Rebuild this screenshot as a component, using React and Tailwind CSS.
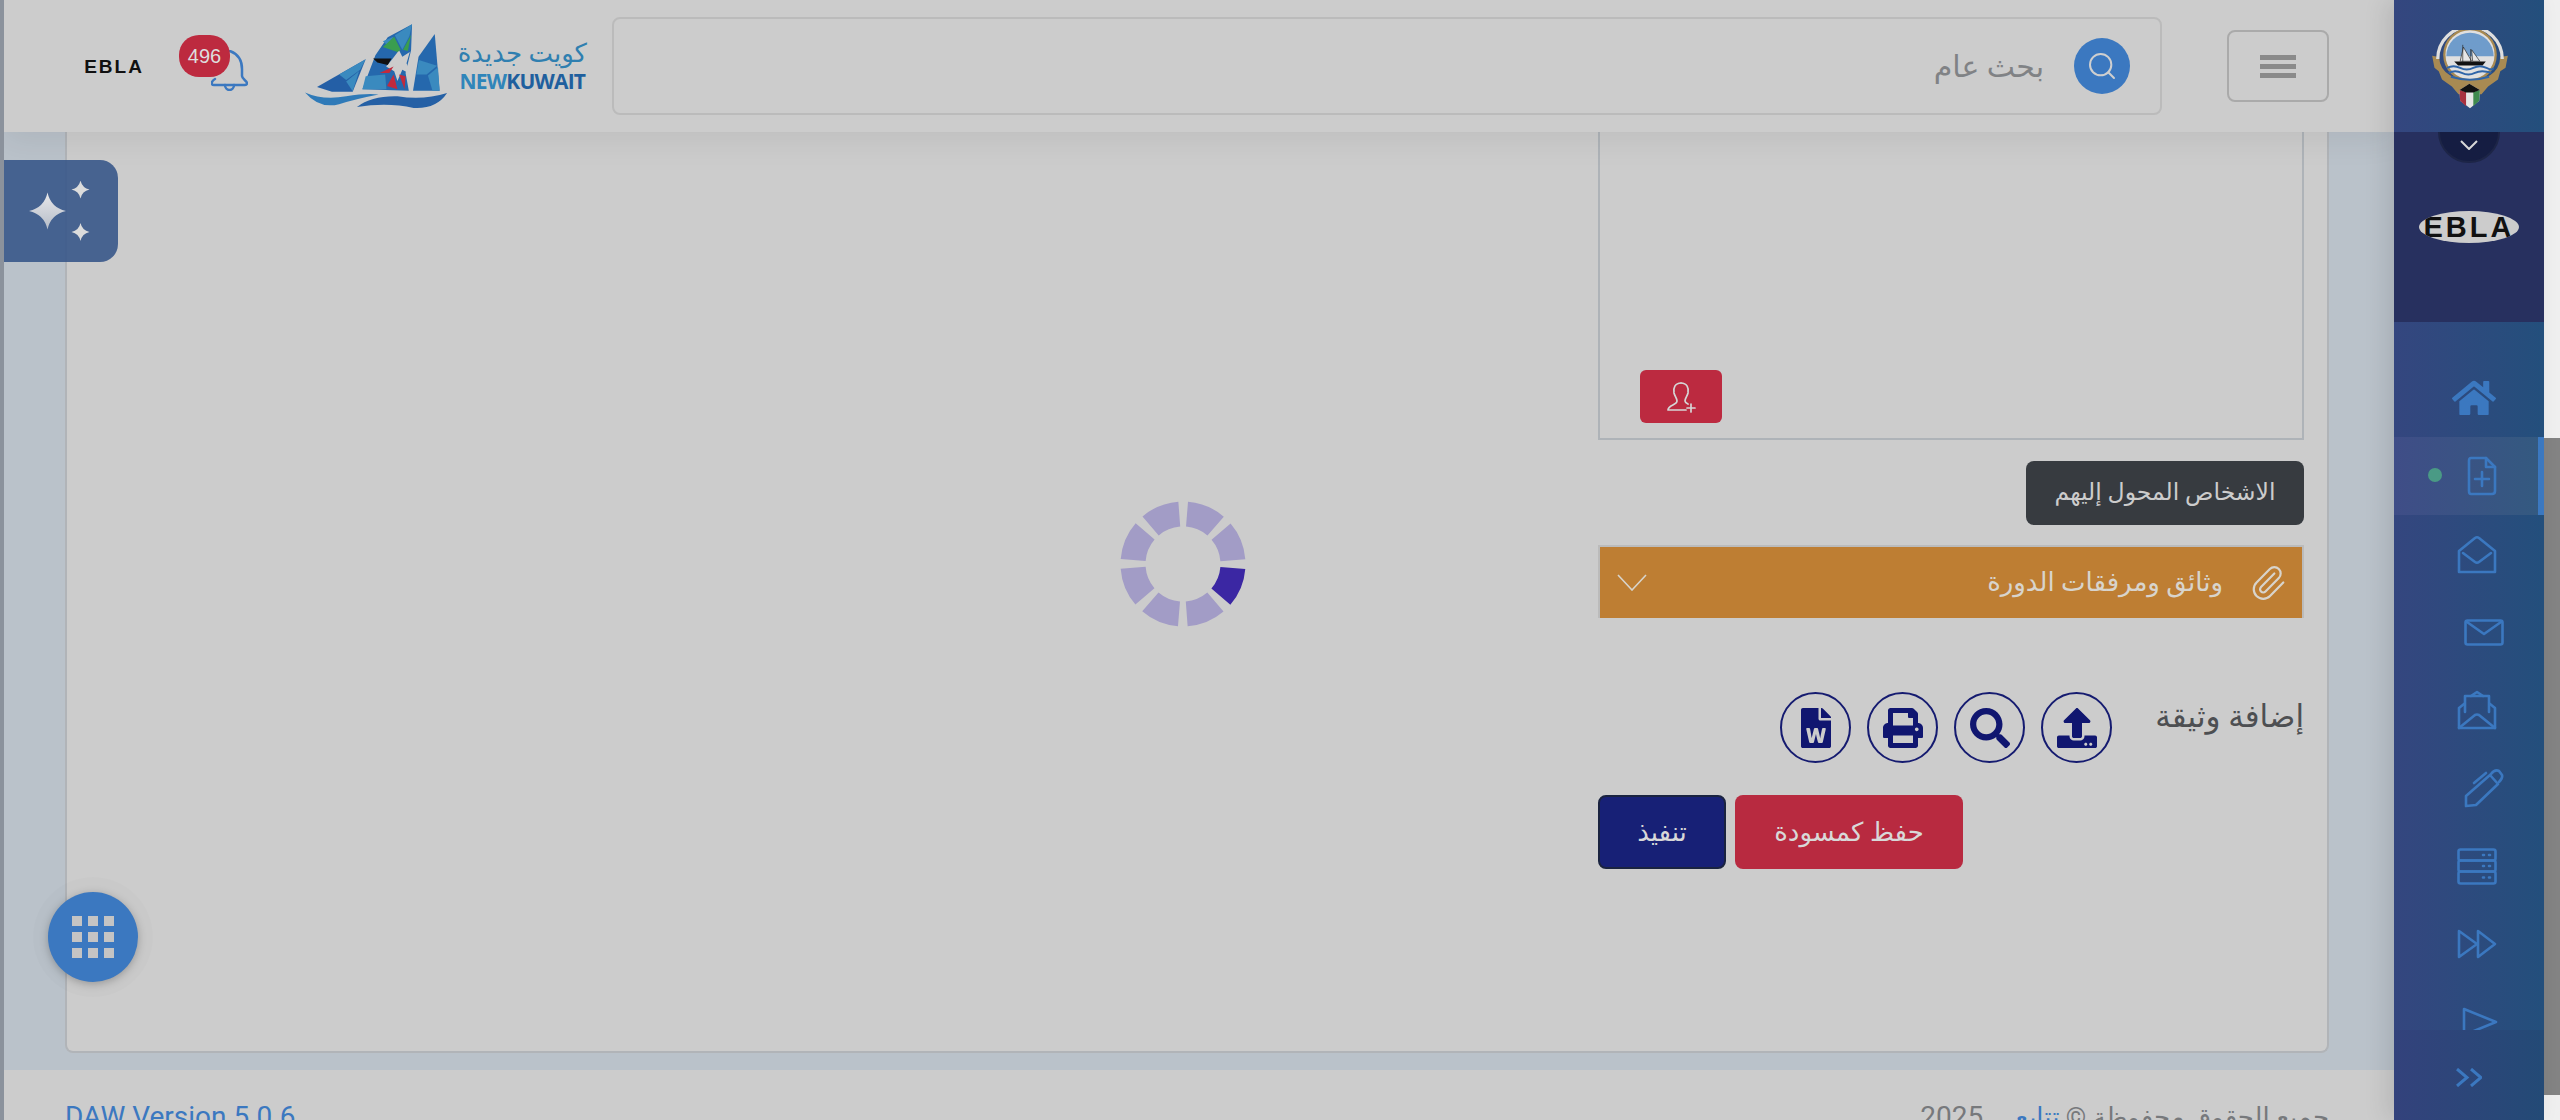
import { Paperclip, Search } from 'lucide-react';
import { FaFileWord, FaHome, FaPrint, FaSearch, FaUpload } from 'react-icons/fa';

function star(cx, cy, r) {
  const k = r * 0.18;
  return `M${cx} ${cy - r} Q${cx + k} ${cy - k} ${cx + r} ${cy} Q${cx + k} ${cy + k} ${cx} ${cy + r} Q${cx - k} ${cy + k} ${cx - r} ${cy} Q${cx - k} ${cy - k} ${cx} ${cy - r}Z`;
}

function Outline({ w, h, children }) {
  return (
    <svg width={w} height={h} viewBox={`0 0 ${w} ${h}`} fill="none" stroke="#3b78c0" strokeWidth="2.6" strokeLinejoin="round" strokeLinecap="round">
      {children}
    </svg>
  );
}

const navItems = [
  {
    cls: 'pl-[58px]',
    icon: <FaHome size={44} color="#3b78c0" />,
  },
  {
    cls: 'pl-[73px] bg-gradient-to-r from-[#3f4d87] to-[#335a80] relative',
    active: true,
    icon: (
      <Outline w={30} h={40}>
        <path d="M4 2 H19 L28 11 V35 Q28 38 25 38 H4 Q2 38 2 35 V5 Q2 2 4 2Z" />
        <path d="M19 2 V11 H28" />
        <path d="M8 23 H22 M15 16 V30" />
      </Outline>
    ),
  },
  {
    cls: 'pl-[63px]',
    icon: (
      <Outline w={40} h={39}>
        <path d="M2 16 L18 3 Q20 1.500 22 3 L38 16 V37 H2Z" />
        <path d="M6 18 L18 27 Q20 28.500 22 27 L34 18" />
      </Outline>
    ),
  },
  {
    cls: 'pl-[70px]',
    icon: (
      <Outline w={40} h={27}>
        <rect x="1.500" y="1.500" width="37" height="24" rx="2" />
        <path d="M3 3 L20 15 L37 3" />
      </Outline>
    ),
  },
  {
    cls: 'pl-[63px]',
    icon: (
      <Outline w={40} h={40}>
        <path d="M2 18 V38 H38 V18 L33 14 M2 18 L7 14 M14 6 L20 2 L26 6" />
        <path d="M8 22 V6 H32 V22" />
        <path d="M2 38 L18 25 Q20 24 22 25 L38 38" />
      </Outline>
    ),
  },
  {
    cls: 'pl-[70px]',
    icon: (
      <Outline w={40} h={40}>
        <path d="M2 28 L26 7 L34 16 L12 37 L2 38Z" />
        <path d="M27 6 Q31 1 35 3 L38 7 Q39 10 35 14" />
        <path d="M10 15 L22 5" />
      </Outline>
    ),
  },
  {
    cls: 'pl-[63px]',
    icon: (
      <Outline w={40} h={37}>
        <rect x="1.500" y="1.500" width="37" height="11" rx="2" />
        <rect x="1.500" y="12.500" width="37" height="11" rx="2" />
        <rect x="1.500" y="23.500" width="37" height="12" rx="2" />
        <path d="M26 7 h1 M32 7 h1 M26 18 h1 M32 18 h1 M26 29.500 h1 M32 29.500 h1" />
      </Outline>
    ),
  },
  {
    cls: 'pl-[63px]',
    icon: (
      <Outline w={40} h={30}>
        <path d="M2 2 L20 15 L2 28Z" />
        <path d="M21 2 L38 15 L21 28Z" />
      </Outline>
    ),
  },
  {
    cls: 'pl-[68px]',
    icon: (
      <Outline w={36} h={30}>
        <path d="M2 2 L34 15 L2 28Z" />
      </Outline>
    ),
  },
];

function Emblem() {
  return (
    <svg width="76" height="79" viewBox="155 90 230 240">
      <path d="M155 168 L176 172 Q178 210 210 228 Q240 240 268 222 Q300 240 330 228 Q360 210 362 172 L385 168 L378 205 L362 215 L355 240 L325 262 L305 285 H235 L215 262 L185 240 L175 215 L162 205Z" fill="#a88a52" />
      <path d="M172 178 A98 98 0 0 1 368 178" fill="none" stroke="#dedede" strokeWidth="10" />
      <circle cx="270" cy="165" r="78" fill="#e0e0e0" stroke="#a88a52" strokeWidth="7" />
      <path d="M198 170 A72 72 0 0 1 342 170Z" fill="#6f9ccb" />
      <path d="M222 186 H318 L308 198 H234Z" fill="#111" />
      <path d="M248 135 V190 M272 148 V190 M250 142 L275 185 H240Z M275 150 L300 185 H278Z" fill="#e6e6e6" stroke="#222" strokeWidth="2" />
      <path d="M200 205 Q220 195 240 205 T280 205 T320 205 T340 205 M205 220 Q225 210 245 220 T285 220 T335 220" fill="none" stroke="#2f65a8" strokeWidth="6" />
      <path d="M212 232 Q270 250 328 232" fill="none" stroke="#2f65a8" strokeWidth="6" />
      <path d="M238 272 L268 253 L300 272 L298 305 L270 328 L240 305Z" fill="#e6e6e6" />
      <path d="M238 272 L258 278 V322 L240 305Z" fill="#a8313f" />
      <path d="M300 272 L280 278 V322 L298 305Z" fill="#3f8a4e" />
      <path d="M238 272 L268 253 L300 272 L280 280 H258Z" fill="#111" />
    </svg>
  );
}

function BoatLogo() {
  return (
    <svg width="147" height="87" viewBox="45 50 440 260">
      {/* left sail */}
      <path d="M82 243 L232 158 L192 258 H128Z" fill="#245fa6" />
      <path d="M150 205 L232 158 L215 190 L172 222Z" fill="#3a8abf" />
      <path d="M172 226 L212 194 L192 256Z" fill="#3a8abf" />
      {/* middle sail */}
      <path d="M375 50 L300 90 L262 145 L222 250 L365 255 L355 200 L372 130Z" fill="#2568ad" />
      <path d="M375 50 L322 84 L345 128 L367 86Z" fill="#3a8abf" />
      <path d="M285 102 L318 88 L300 115Z" fill="#3a8abf" />
      <path d="M232 210 L292 205 L296 250 H222Z" fill="#3a8abf" />
      <path d="M312 160 L335 130 L345 150 L368 135 L358 170 L372 205 L345 190 L330 225 L320 195 L295 180Z" fill="#cccccc" />
      <path d="M320 88 L340 128 L330 135 L285 120Z" fill="#3a9d4f" />
      <path d="M372 82 L362 132 L347 128Z" fill="#3a9d4f" />
      <path d="M255 155 L312 155 L300 175 L268 168Z" fill="#111" />
      <path d="M275 200 L318 180 L305 200Z" fill="#c22a3d" />
      <path d="M318 205 L330 250 L298 240Z" fill="#c22a3d" />
      <path d="M335 205 L355 210 L352 250Z" fill="#c22a3d" />
      {/* right sail */}
      <path d="M445 80 L395 150 L378 255 H460Z" fill="#2568ad" />
      <path d="M396 160 L452 178 L420 205 L388 205Z" fill="#3a8abf" />
      <path d="M424 208 L455 182 L460 255 H438Z" fill="#3a8abf" />
      {/* waves */}
      <path d="M45 260 Q100 285 172 272 Q230 262 272 266 Q200 280 150 296 Q90 312 45 260Z" fill="#2f7ab8" />
      <path d="M205 305 Q250 270 330 272 Q410 285 483 262 Q450 312 380 308 Q300 290 205 305Z" fill="#2560a5" />
    </svg>
  );
}

function Spinner() {
  const segments = [0, 1, 2, 3, 4, 5, 6, 7];
  return (
    <svg width="128" height="128" viewBox="0 0 128 128">
      {segments.map(i => (
        <circle
          key={i}
          cx="64"
          cy="64"
          r="50"
          fill="none"
          stroke={i === 0 ? '#3b27a3' : '#a29cc6'}
          strokeWidth="25"
          strokeDasharray="31.500 282.660"
          transform={`rotate(${i * 45 + 4.600} 64 64)`}
        />
      ))}
    </svg>
  );
}

function CircleBtn({ children }) {
  return (
    <button className="w-[71px] h-[71px] rounded-full border-2 border-[#151b70] flex items-center justify-center text-[#101670]">
      {children}
    </button>
  );
}

export default function App() {
  return (
    <div dir="rtl" className="flex h-[1120px] w-[2560px] overflow-hidden bg-[#bac2ca] font-['Roboto','DejaVu_Sans',sans-serif] relative">
      {/* scrollbar */}
      <div className="w-[16px] shrink-0 bg-[#efefef] pt-[438px]">
        <div className="h-[657px] bg-[#838383]" />
      </div>

      {/* sidebar */}
      <aside dir="ltr" className="w-[150px] shrink-0 flex flex-col relative z-20 shadow-[-8px_0_22px_rgba(0,0,0,0.1)] bg-gradient-to-r from-[#34467f] to-[#234f7c]">
        <div className="h-[132px] shrink-0 pt-[30px] pl-[38px] relative z-10 bg-gradient-to-r from-[#34467f] to-[#234f7c]">
          <Emblem />
        </div>
        <div className="h-[190px] shrink-0 bg-[#27305f] relative flex justify-center pt-[79px] pr-[0px]">
          <div className="absolute -top-[31px] left-[44px] w-[62px] h-[62px] rounded-full bg-[#151d42] border-2 border-[#1d2547] flex items-end justify-center pb-[11px]">
            <svg width="18" height="10" viewBox="0 0 18 10" fill="none" stroke="#d8d8d8" strokeWidth="2">
              <path d="M1 1 L9 9 L17 1" />
            </svg>
          </div>
          <div className="w-[100px] h-[32px] rounded-[50%] bg-[#cccccc] overflow-hidden flex items-center justify-center text-[29px] leading-none font-bold tracking-[3px] text-[#111] font-['Liberation_Sans',sans-serif]">
            EBLA
          </div>
        </div>
        <nav className="flex-1 min-h-0 overflow-hidden pt-[37px]">
          {navItems.map((item, i) => (
            <div key={i} className={`h-[78px] flex items-center ${item.cls}`}>
              {item.active && (
                <>
                  <span className="absolute left-[34px] top-[31px] w-[14px] h-[14px] rounded-full bg-[#4a9a85]" />
                  <span className="absolute right-0 top-0 bottom-0 w-[6px] bg-[#3b78c0]" />
                </>
              )}
              {item.icon}
            </div>
          ))}
        </nav>
        <div className="h-[90px] shrink-0 bg-gradient-to-r from-[#33427c] to-[#234a76] pl-[62px] pt-[38px]">
          <svg width="26" height="19" viewBox="0 0 26 19" fill="none" stroke="#3b78c0" strokeWidth="3">
            <path d="M1 1 L11 9.500 L1 18 M15 1 L25 9.500 L15 18" />
          </svg>
        </div>
      </aside>

      {/* main column */}
      <div className="flex-1 min-w-0 flex flex-col relative">
        <header className="h-[132px] shrink-0 bg-[#cccccc] relative z-10 shadow-[0_8px_30px_rgba(0,0,0,0.07)] flex items-center pr-[65px]">
          <button className="w-[102px] h-[72px] rounded-lg border-2 border-[#aaaaaa] flex flex-col items-center justify-center gap-[4px]">
            <span className="w-[36px] h-[5px] bg-[#8a8a8a]" />
            <span className="w-[36px] h-[5px] bg-[#8a8a8a]" />
            <span className="w-[36px] h-[5px] bg-[#8a8a8a]" />
          </button>
          <div className="w-[1550px] h-[98px] mr-[65px] rounded-lg border-2 border-[#bbbbbb] flex items-center pr-[30px] gap-[30px]">
            <span className="w-[56px] h-[56px] rounded-full bg-[#3b78c0] flex items-center justify-center text-[#cfcfcf]">
              <Search size={32} strokeWidth={1.5} />
            </span>
            <span className="text-[30px] text-[#808285]">بحث عام</span>
          </div>
          <div dir="ltr" className="w-[282px] mr-[25px] flex items-center gap-[10px]">
            <BoatLogo />
            <div className="flex flex-col items-center -mt-[5px]">
              <span dir="rtl" className="text-[26px] leading-[34px] whitespace-nowrap text-[#2f7fb0]">كويت جديدة</span>
              <span className="text-[21px] leading-[22px] font-bold tracking-[-0.8px] font-['Open_Sans',sans-serif]">
                <span className="text-[#2f85ba]">NEW</span>
                <span className="text-[#1f5f9e]">KUWAIT</span>
              </span>
            </div>
          </div>
          <div className="w-[69px] h-[56px] mr-[57px] mb-[6px] relative">
            <svg className="absolute left-[32px] top-[15px]" width="37" height="41" viewBox="0 0 37 41" fill="none" stroke="#3b78c0" strokeWidth="2.500" strokeLinecap="round">
              <path d="M19 1 C27 4 31 11 31 19 L31 26 C31 29 36 31 36 33 Q36 35 34 35 L3 35 Q0 35 1 32 Q2 30 4 29" />
              <path d="M14 35 a4.500 5 0 0 0 9 0" />
            </svg>
            <span className="absolute left-0 top-0 w-[51px] h-[42px] rounded-[20px] bg-[#bd2a3f] flex items-center justify-center text-[20px] text-[#dddddd] font-['Liberation_Sans',sans-serif]">
              496
            </span>
          </div>
          <span dir="ltr" className="mr-[35px] w-[60px] text-center text-[19px] leading-none font-bold tracking-[2px] text-[#111] font-['Liberation_Sans',sans-serif]">
            EBLA
          </span>
        </header>

        <main className="flex-1 min-h-0 pr-[65px] pl-[61px] pb-[17px]">
          <div className="h-full bg-[#cccccc] border-x-2 border-b-2 border-[#b1b4b8] rounded-b-lg pr-[23px] relative">
            <div className="w-[706px] flex flex-col">
              <div className="h-[308px] border-x-2 border-b-2 border-[#aeb3b8] flex flex-col justify-end items-end pl-[40px] pb-[15px]">
                <button className="w-[82px] h-[53px] rounded-md bg-[#bc2a40] flex items-center justify-center">
                  <svg width="32" height="32" viewBox="0 0 32 32" fill="none" stroke="#d6d6d6" strokeWidth="1.700" strokeLinecap="round" strokeLinejoin="round">
                    <path d="M16 2 C10 2 8 7 9 12 C10 16 12 17 12 20 C12 24 3 24 3 29 H21" />
                    <path d="M16 2 C22 2 24 7 23 12 C22 16 20 17 20 20 C20 21 21 22 23 23" />
                    <path d="M26 23 V31 M22 27 H30" />
                  </svg>
                </button>
              </div>
              <button className="mt-[21px] w-[278px] h-[64px] rounded-lg bg-[#373b40] text-[23.5px] text-[#cccccc] text-center">
                الاشخاص المحول إليهم
              </button>
              <div className="mt-[20px] h-[73px] border-x-2 border-t-2 border-[#bbbbbb] bg-[#be7e33] flex items-center justify-between pr-[15px] pl-[17px] text-[#d8d4cc]">
                <div className="flex items-center gap-[26px]">
                  <Paperclip size={38} strokeWidth={1.4} />
                  <span className="text-[26px]">وثائق ومرفقات الدورة</span>
                </div>
                <svg width="30" height="17" viewBox="0 0 30 17" fill="none" stroke="#d8d4cc" strokeWidth="1.600">
                  <path d="M1 1 L15 16 L29 1" />
                </svg>
              </div>
              <div className="mt-[74px] h-[71px] flex items-start">
                <span className="w-[151px] whitespace-nowrap text-[31px] leading-[50px] text-[#4d4f52] ml-[41px]">إضافة وثيقة</span>
                <div className="flex gap-[16px]">
                  <CircleBtn><FaUpload size={40} /></CircleBtn>
                  <CircleBtn><FaSearch size={40} /></CircleBtn>
                  <CircleBtn><FaPrint size={40} /></CircleBtn>
                  <CircleBtn><FaFileWord size={40} /></CircleBtn>
                </div>
              </div>
              <div className="mt-[32px] flex justify-end gap-[9px]">
                <button className="w-[228px] h-[74px] rounded-lg bg-[#b82a40] text-[26px] text-[#d8d8d8]">حفظ كمسودة</button>
                <button className="w-[128px] h-[74px] rounded-lg bg-[#172076] border-2 border-[#1a2340] text-[26px] text-[#d8d8d8]">تنفيذ</button>
              </div>
            </div>
          </div>
        </main>

        <footer className="h-[50px] shrink-0 bg-[#cccccc] flex justify-between pr-[65px] pl-[61px] pt-[32px] text-[28px] leading-[30px] whitespace-nowrap">
          <span className="text-[#77797c] flex gap-[32px]">
            <span>
              <span className="text-[26px]">جميع الحقوق محفوظة © </span>
              <span className="text-[26px] text-[#3b78c0]">تتابع</span>
            </span>
            <span>2025</span>
          </span>
          <span dir="ltr" className="text-[#3b78c0]">DAW Version 5.0.6</span>
        </footer>
      </div>

      <div className="w-[4px] shrink-0 bg-[#8b929c] relative z-10" />

      <div className="absolute left-[1119px] top-[500px] z-30">
        <Spinner />
      </div>
      <button dir="ltr" className="absolute left-[4px] top-[160px] w-[114px] h-[102px] rounded-r-[18px] bg-[rgba(52,84,135,0.88)] z-30 flex items-center pl-[25px]">
        <svg width="61" height="60" viewBox="0 0 61 60">
          <defs>
            <linearGradient id="sparkle" x1="0" y1="0" x2="0" y2="1">
              <stop offset="0" stopColor="#e8e8ea" />
              <stop offset="1" stopColor="#b5bcc8" />
            </linearGradient>
          </defs>
          <path d={star(18.5, 30, 18.5)} fill="url(#sparkle)" />
          <path d={star(51.5, 8.5, 9)} fill="#dcdcdc" />
          <path d={star(51.5, 51, 9)} fill="#dcdcdc" />
        </svg>
      </button>
      <button className="absolute left-[48px] top-[892px] w-[90px] h-[90px] rounded-full bg-[#3b78c0] shadow-[0_2px_8px_rgba(0,0,0,0.25),0_0_0_15px_rgba(0,0,0,0.012)] z-30 flex items-center justify-center">
        <span className="grid grid-cols-3 gap-[6px]">
          {[0, 1, 2, 3, 4, 5, 6, 7, 8].map(n => (
            <span key={n} className="w-[10px] h-[10px] bg-[#c4c4c4]" />
          ))}
        </span>
      </button>
    </div>
  );
}
